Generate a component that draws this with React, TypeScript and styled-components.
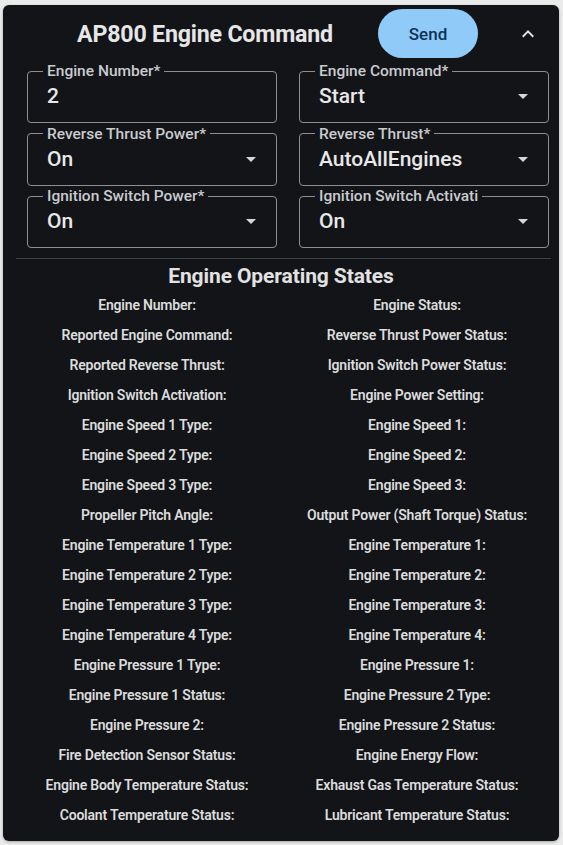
import React from "react";
import styled, { createGlobalStyle } from "styled-components";

const GlobalStyle = createGlobalStyle`
  html, body {
    margin: 0;
    padding: 0;
    background: #ebebeb;
  }
  body {
    font-family: Roboto, "Liberation Sans", Arial, sans-serif;
  }
`;

const Page = styled.div`
  padding: 5px 4px 4px 3px;
`;

const Card = styled.section`
  background: #121418;
  border-radius: 6px;
  box-shadow: 0 1px 3px rgba(0, 0, 0, 0.3);
  height: 836px;
  box-sizing: border-box;
  color: #e4e4e4;
  overflow: hidden;
`;

const Header = styled.header`
  height: 58px;
  display: flex;
  align-items: center;
  padding: 0 11px 0 24px;
`;

const Title = styled.h1`
  flex: 1;
  margin: 0 0 0 5px;
  text-align: center;
  font-size: 23.2px;
  font-weight: 700;
  color: #e6e6e6;
  letter-spacing: -0.2px;
`;

const SendButton = styled.button`
  width: 100px;
  height: 49px;
  border: none;
  border-radius: 25px;
  background: #90caf9;
  color: #0c3453;
  font-family: inherit;
  font-size: 17px;
  font-weight: 500;
  margin-top: -1px;
  cursor: pointer;
`;

const IconButton = styled.button`
  width: 40px;
  height: 40px;
  margin-left: 30px;
  border: none;
  background: transparent;
  color: #e0e0e0;
  display: flex;
  align-items: center;
  justify-content: center;
  padding: 0;
  cursor: pointer;
`;

const FieldGrid = styled.div`
  display: grid;
  grid-template-columns: 250px 250px;
  column-gap: 22px;
  row-gap: 2.5px;
  padding: 0 0 0 24px;
`;

const Field = styled.fieldset`
  margin: 0;
  min-width: 0;
  padding: 0 20px 0 15px;
  border: 1px solid #8d8f93;
  border-radius: 4px;
  box-sizing: border-box;
  height: 60px;
`;

const Legend = styled.legend`
  padding: 0 4px;
  font-size: 15.5px;
  font-weight: 500;
  line-height: 16px;
  color: #c9cbce;
  white-space: nowrap;
  max-width: 166px;
  overflow: hidden;
`;

const FieldBody = styled.div`
  height: 43px;
  box-sizing: border-box;
  padding: 0 0 9px 4px;
  display: flex;
  align-items: center;
`;

const Value = styled.span`
  flex: 1;
  font-size: 21px;
  font-weight: 500;
  color: #e8e8e8;
`;

const Divider = styled.hr`
  margin: 10px 8px 0 13px;
  border: none;
  border-top: 1px solid #3e4145;
`;

const SectionTitle = styled.h2`
  margin: 4px 0 0;
  text-align: center;
  font-size: 21px;
  font-weight: 700;
  line-height: 26px;
  color: #e2e2e2;
  letter-spacing: -0.1px;
`;

const StatesGrid = styled.div`
  display: grid;
  grid-template-columns: 1fr 1fr;
  grid-auto-rows: 30px;
  padding: 1px 7px 0 9px;
`;

const StateItem = styled.div`
  display: flex;
  align-items: center;
  justify-content: center;
  font-size: 14px;
  font-weight: 600;
  color: #dcdcdc;
  letter-spacing: -0.2px;
`;

const ArrowDown = () => (
  <svg width="24" height="24" viewBox="0 0 24 24" fill="#d6d6d6" style={{ marginRight: -7 }}>
    <path d="M7 10l5 5 5-5z" />
  </svg>
);

const ExpandLess = () => (
  <svg width="24" height="24" viewBox="0 0 24 24" fill="currentColor">
    <path d="M12 8l-6 6 1.41 1.41L12 10.83l4.59 4.58L18 14z" />
  </svg>
);

type FieldDef = { label: string; value: string; select: boolean };

const fields: FieldDef[] = [
  { label: "Engine Number*", value: "2", select: false },
  { label: "Engine Command*", value: "Start", select: true },
  { label: "Reverse Thrust Power*", value: "On", select: true },
  { label: "Reverse Thrust*", value: "AutoAllEngines", select: true },
  { label: "Ignition Switch Power*", value: "On", select: true },
  { label: "Ignition Switch Activati", value: "On", select: true },
];

const states = [
  "Engine Number:",
  "Engine Status:",
  "Reported Engine Command:",
  "Reverse Thrust Power Status:",
  "Reported Reverse Thrust:",
  "Ignition Switch Power Status:",
  "Ignition Switch Activation:",
  "Engine Power Setting:",
  "Engine Speed 1 Type:",
  "Engine Speed 1:",
  "Engine Speed 2 Type:",
  "Engine Speed 2:",
  "Engine Speed 3 Type:",
  "Engine Speed 3:",
  "Propeller Pitch Angle:",
  "Output Power (Shaft Torque) Status:",
  "Engine Temperature 1 Type:",
  "Engine Temperature 1:",
  "Engine Temperature 2 Type:",
  "Engine Temperature 2:",
  "Engine Temperature 3 Type:",
  "Engine Temperature 3:",
  "Engine Temperature 4 Type:",
  "Engine Temperature 4:",
  "Engine Pressure 1 Type:",
  "Engine Pressure 1:",
  "Engine Pressure 1 Status:",
  "Engine Pressure 2 Type:",
  "Engine Pressure 2:",
  "Engine Pressure 2 Status:",
  "Fire Detection Sensor Status:",
  "Engine Energy Flow:",
  "Engine Body Temperature Status:",
  "Exhaust Gas Temperature Status:",
  "Coolant Temperature Status:",
  "Lubricant Temperature Status:",
];

export default function App() {
  return (
    <>
      <GlobalStyle />
      <Page>
        <Card>
          <Header>
            <Title>AP800 Engine Command</Title>
            <SendButton>Send</SendButton>
            <IconButton aria-label="collapse">
              <ExpandLess />
            </IconButton>
          </Header>

          <FieldGrid>
            {fields.map((f) => (
              <Field key={f.label}>
                <Legend>{f.label}</Legend>
                <FieldBody>
                  <Value>{f.value}</Value>
                  {f.select && <ArrowDown />}
                </FieldBody>
              </Field>
            ))}
          </FieldGrid>

          <Divider />
          <SectionTitle>Engine Operating States</SectionTitle>

          <StatesGrid>
            {states.map((s) => (
              <StateItem key={s}>{s}</StateItem>
            ))}
          </StatesGrid>
        </Card>
      </Page>
    </>
  );
}
